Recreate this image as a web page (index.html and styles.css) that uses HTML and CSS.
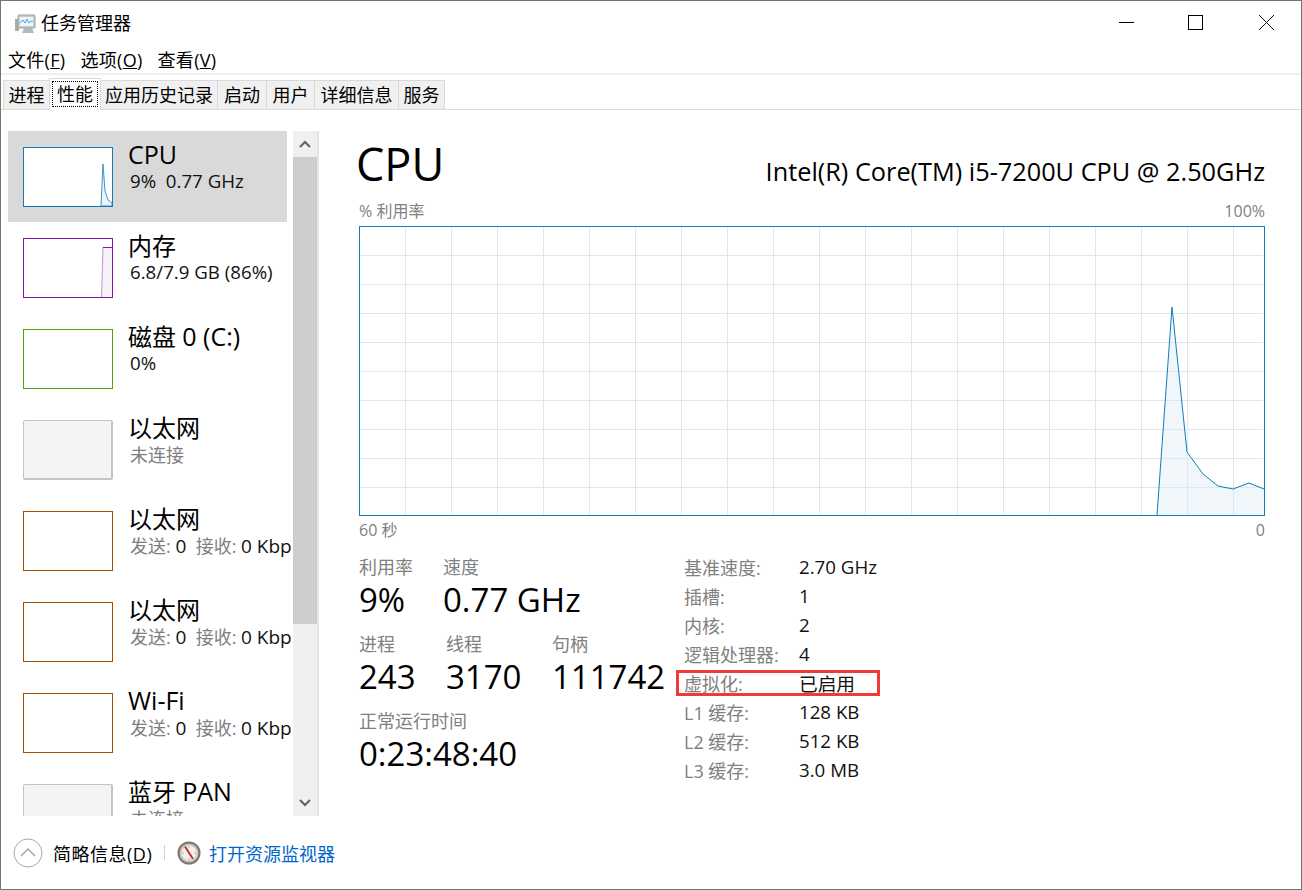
FILE: index.html
```html
<!DOCTYPE html>
<html lang="zh-CN">
<head>
  <meta charset="UTF-8" />
  <title>任务管理器</title>
  <link rel="stylesheet" href="styles.css">
</head>
<body>
  <div class="window">
    <div class="titlebar">
      <svg class="app-icon" width="22" height="22" viewBox="0 0 22 22">
        <rect x="1" y="7" width="4" height="12" fill="#a9aeab"/>
        <rect x="4" y="3" width="17" height="13" rx="1" fill="#c9cccc" stroke="#9a9fa1"/>
        <rect x="6" y="5" width="13" height="9" fill="#eef5fb"/>
        <path d="M6 11l3-3 2 3 2-4 2 4 2-2 2 1" fill="none" stroke="#4aa3e0"/>
        <path d="M8 21h12l-2-5H10z" fill="#b4b8b8"/>
      </svg>
      <span class="title">任务管理器</span>
      <div class="win-btns">
        <svg width="15" height="15" viewBox="0 0 15 15"><path d="M0 7.5h15" stroke="#000"/></svg>
        <svg width="15" height="15" viewBox="0 0 15 15"><rect x="0.5" y="0.5" width="14" height="14" fill="none" stroke="#000"/></svg>
        <svg class="btn-close" width="15" height="15" viewBox="0 0 15 15"><path d="M0 0l15 15M15 0L0 15" stroke="#111" fill="none"/></svg>
      </div>
    </div>

    <div class="menubar">
      <span>文件(<u>F</u>)</span>
      <span>选项(<u>O</u>)</span>
      <span>查看(<u>V</u>)</span>
    </div>

    <div class="tabs">
      <div class="tab tab-first">进程</div>
      <div class="tab tab-active">性能</div>
      <div class="tab tab-w117">应用历史记录</div>
      <div class="tab tab-w49">启动</div>
      <div class="tab tab-w48">用户</div>
      <div class="tab tab-w84">详细信息</div>
      <div class="tab tab-w46">服务</div>
    </div>

    <div class="content">
      <div class="sidebar">
        <div class="list">
          <div class="item item-active">
            <svg class="thumb thumb-cpu" viewBox="0 0 88 58" width="90" height="60">
              <path d="M77 58L79 16 81 43 84 52 88 55V58Z" fill="#eef4f9" stroke="#117dbb" stroke-opacity=".8"/>
            </svg>
            <div class="item-text">
              <div class="item-name"><span class="latin">CPU</span></div>
              <div class="item-sub dark">9%&nbsp; 0.77 GHz</div>
            </div>
          </div>
          <div class="item">
            <svg class="thumb thumb-mem" viewBox="0 0 88 58" width="90" height="60">
              <path d="M77.5 58L79 8H88V58Z" fill="#f4f2f4"/>
              <path d="M77.5 58L79 8" stroke="#c890d8" fill="none"/>
              <path d="M79 8.5H88" stroke="#8b12ae" fill="none"/>
            </svg>
            <div class="item-text">
              <div class="item-name">内存</div>
              <div class="item-sub dark">6.8/7.9 GB (86%)</div>
            </div>
          </div>
          <div class="item">
            <div class="thumb thumb-disk"></div>
            <div class="item-text">
              <div class="item-name">磁盘 <span class="latin">0 (C:)</span></div>
              <div class="item-sub dark">0%</div>
            </div>
          </div>
          <div class="item">
            <div class="thumb thumb-off"></div>
            <div class="item-text">
              <div class="item-name">以太网</div>
              <div class="item-sub">未连接</div>
            </div>
          </div>
          <div class="item">
            <div class="thumb thumb-net"></div>
            <div class="item-text">
              <div class="item-name">以太网</div>
              <div class="item-sub">发送: <b>0</b>&nbsp; 接收: <b>0 Kbps</b></div>
            </div>
          </div>
          <div class="item">
            <div class="thumb thumb-net"></div>
            <div class="item-text">
              <div class="item-name">以太网</div>
              <div class="item-sub">发送: <b>0</b>&nbsp; 接收: <b>0 Kbps</b></div>
            </div>
          </div>
          <div class="item">
            <div class="thumb thumb-net"></div>
            <div class="item-text">
              <div class="item-name"><span class="latin">Wi-Fi</span></div>
              <div class="item-sub">发送: <b>0</b>&nbsp; 接收: <b>0 Kbps</b></div>
            </div>
          </div>
          <div class="item">
            <div class="thumb thumb-off"></div>
            <div class="item-text">
              <div class="item-name">蓝牙 <span class="latin">PAN</span></div>
              <div class="item-sub">未连接</div>
            </div>
          </div>
        </div>
        <div class="scrollbar">
          <div class="sb-btn">
            <svg width="12" height="8" viewBox="0 0 12 8"><path d="M1 7l5-5 5 5" fill="none" stroke="#606060" stroke-width="2"/></svg>
          </div>
          <div class="sb-track"><div class="sb-thumb"></div></div>
          <div class="sb-btn">
            <svg width="12" height="8" viewBox="0 0 12 8"><path d="M1 1l5 5 5-5" fill="none" stroke="#606060" stroke-width="2"/></svg>
          </div>
        </div>
      </div>

      <div class="main">
        <div class="main-head">
          <div class="main-title">CPU</div>
          <div class="cpu-model">Intel(R) Core(TM) i5-7200U CPU @ 2.50GHz</div>
        </div>
        <div class="graph-labels">
          <span>% 利用率</span>
          <span>100%</span>
        </div>
        <svg id="graph" class="graph" width="906" height="290" viewBox="0 0 906 290"></svg>
        <div class="graph-labels graph-bottom">
          <span>60 秒</span>
          <span>0</span>
        </div>

        <div class="details">
          <div class="stats">
            <div class="stat-row">
              <div class="stat stat-usage"><div class="stat-label">利用率</div><div class="stat-value">9%</div></div>
              <div class="stat"><div class="stat-label">速度</div><div class="stat-value">0.77 GHz</div></div>
            </div>
            <div class="stat-row">
              <div class="stat stat-proc"><div class="stat-label">进程</div><div class="stat-value">243</div></div>
              <div class="stat stat-thread"><div class="stat-label">线程</div><div class="stat-value">3170</div></div>
              <div class="stat"><div class="stat-label">句柄</div><div class="stat-value">111742</div></div>
            </div>
            <div class="stat-row">
              <div class="stat"><div class="stat-label">正常运行时间</div><div class="stat-value">0:23:48:40</div></div>
            </div>
          </div>
          <div class="specs">
            <div class="spec"><span class="spec-k">基准速度:</span><span class="spec-v">2.70 GHz</span></div>
            <div class="spec"><span class="spec-k">插槽:</span><span class="spec-v">1</span></div>
            <div class="spec"><span class="spec-k">内核:</span><span class="spec-v">2</span></div>
            <div class="spec"><span class="spec-k">逻辑处理器:</span><span class="spec-v">4</span></div>
            <div class="spec spec-mark"><span class="spec-k">虚拟化:</span><span class="spec-v">已启用</span></div>
            <div class="spec"><span class="spec-k">L1 缓存:</span><span class="spec-v">128 KB</span></div>
            <div class="spec"><span class="spec-k">L2 缓存:</span><span class="spec-v">512 KB</span></div>
            <div class="spec"><span class="spec-k">L3 缓存:</span><span class="spec-v">3.0 MB</span></div>
          </div>
        </div>
      </div>
    </div>

    <div class="footer">
      <svg class="collapse" width="30" height="30" viewBox="0 0 30 30">
        <circle cx="15" cy="15" r="14" fill="#fff" stroke="#a8a8a8"/>
        <path d="M8 18l7-7 7 7" fill="none" stroke="#a8a8a8" stroke-width="1.5"/>
      </svg>
      <span class="footer-text">简略信息(<u>D</u>)</span>
      <span class="footer-sep"></span>
      <svg class="monitor-icon" width="24" height="24" viewBox="0 0 24 24">
        <circle cx="12" cy="12" r="11.5" fill="#77776f"/>
        <circle cx="12" cy="12" r="9.5" fill="#c9c6bd"/>
        <circle cx="12" cy="12" r="7.5" fill="#f2f0ec"/>
        <path d="M8 5.5l8 12.5" stroke="#c9322a" stroke-width="2"/>
        <path d="M12 5v2M5 12h2M19 12h-2M12 19v-2" stroke="#b5b3ab"/>
      </svg>
      <span class="footer-link">打开资源监视器</span>
    </div>
  </div>

  <script>
    // сетка и кривая загрузки
    var svg = document.getElementById("graph");
    var grid = "";
    for (var x = 46; x < 905; x += 46) {
      grid += '<path d="M' + (x + 0.5) + ' 1V289" stroke="#dbe8f1"/>';
    }
    for (var y = 29; y < 289; y += 29) {
      grid += '<path d="M1 ' + (y + 0.5) + 'H904" stroke="#dbe8f1"/>';
    }
    var line = "798,289 813,81 828,226 844,248 859,260 874,263 890,257 905,263";
    svg.innerHTML = grid +
      '<polygon points="' + line + ' 905,289" fill="#d9e8f2" fill-opacity=".4"/>' +
      '<polyline points="' + line + '" fill="none" stroke="#117dbb"/>' +
      '<rect x="0.5" y="0.5" width="905" height="289" fill="none" stroke="#117dbb"/>';
  </script>
</body>
</html>
```

FILE: styles.css
```css
*, *::after {
  box-sizing: border-box;
}

body {
  margin: 0;
  width: 1302px;
  height: 890px;
  overflow: hidden;
  background: white;
  font-family: "Open Sans", "Noto Sans CJK SC", sans-serif;
  color: #000;
}

.window {
  width: 1302px;
  height: 890px;
  border: 1px solid #6b7a6f;
  display: flex;
  flex-direction: column;
  overflow: hidden;
}

.titlebar {
  height: 47px;
  display: flex;
  align-items: center;
  padding: 0 27px 4px 13px;
  flex-shrink: 0;
}

.app-icon {
  margin-right: 5px;
}

.title {
  font-size: 18px;
  margin-bottom: 2px;
}

.win-btns {
  margin-left: auto;
  display: flex;
  align-items: center;
  gap: 54px;
}

.btn-close {
  margin-left: 2px;
}

.menubar {
  height: 27px;
  display: flex;
  align-items: center;
  padding: 0 0 4px 7px;
  font-size: 18px;
  letter-spacing: 0.3px;
  gap: 15px;
  flex-shrink: 0;
  border-bottom: 2px solid #f0f0f0;
}

.tabs {
  height: 35px;
  display: flex;
  align-items: flex-end;
  padding-left: 2px;
  border-bottom: 1px solid #d9d9d9;
  flex-shrink: 0;
}

.tab {
  height: 29px;
  background: #f0f0f0;
  border-top: 1px solid #d9d9d9;
  border-right: 1px solid #d9d9d9;
  font-size: 18px;
  line-height: 29px;
  text-align: center;
}

.tab-first {
  width: 47px;
  border-left: 1px solid #d9d9d9;
}

.tab-w46 { width: 46px; }
.tab-w48 { width: 48px; }
.tab-w49 { width: 49px; }
.tab-w84 { width: 84px; }
.tab-w117 { width: 117px; }

.tab-active {
  background: white;
  width: 52px;
  height: 32px;
  line-height: 30px;
  border: 1px solid #d9d9d9;
  border-bottom: none;
  margin: 0 0 -1px -1px;
  outline: 1px dotted #000;
  outline-offset: -4px;
}

.content {
  height: 706px;
  display: flex;
  flex-shrink: 0;
  padding-top: 21px;
}

.sidebar {
  width: 318px;
  height: 685px;
  display: flex;
  padding-left: 7px;
  flex-shrink: 0;
}

.list {
  width: 285px;
  overflow: hidden;
  height: 685px;
}

.item {
  width: 279px;
  height: 91px;
  display: flex;
  padding: 16px 0 0 15px;
  white-space: nowrap;
}

.item-active {
  background: #d9d9d9;
}

.thumb {
  width: 90px;
  height: 60px;
  flex-shrink: 0;
  margin-right: 15px;
  background: white;
  border: 1px solid #999;
  display: block;
}

.thumb-cpu { border-color: #117dbb; }
.thumb-mem { border-color: #8b12ae; }
.thumb-disk { border-color: #4da60c; }
.thumb-net { border-color: #a74f01; }
.thumb-off {
  background: #f4f4f4;
  border: 1px solid #c4c4c4;
  border-right-width: 2px;
  border-bottom-width: 2px;
  border-radius: 2px;
}

.item-name {
  font-size: 24px;
  line-height: 32px;
  margin-top: -8px;
}

.latin {
  font-size: 25px;
  line-height: 0;
}

.item-sub {
  font-size: 18px;
  line-height: 24px;
  margin-top: -1px;
  margin-left: 2px;
  color: #808080;
}

.item-sub.dark {
  font-size: 18.7px;
  margin-top: -2px;
  color: #111;
}

.item-sub b {
  font-weight: normal;
  font-size: 19px;
  color: #111;
}

.scrollbar {
  width: 26px;
  margin-left: 1px;
  display: flex;
  flex-direction: column;
  background: #f0f0f0;
  border-right: 2px solid #e4e4e4;
}

.sb-btn {
  height: 26px;
  display: flex;
  align-items: center;
  justify-content: center;
  flex-shrink: 0;
}

.sb-track {
  flex: 1;
}

.sb-thumb {
  height: 467px;
  background: #cdcdcd;
}

.main {
  flex: 1;
  padding: 0 36px 0 40px;
  min-width: 0;
}

.main-head {
  display: flex;
  justify-content: space-between;
  align-items: flex-start;
  height: 58px;
  margin-left: -3px;
}

.main-title {
  font-size: 45px;
  line-height: 66px;
}

.cpu-model {
  align-self: flex-end;
  font-size: 25.3px;
  line-height: 36px;
  white-space: nowrap;
}

.graph-labels {
  display: flex;
  justify-content: space-between;
  font-size: 16px;
  color: #808080;
  height: 22px;
  line-height: 22px;
  margin-top: 11px;
}

.graph {
  display: block;
  margin-top: 4px;
}

.graph-bottom {
  margin-top: 3px;
}

.details {
  display: flex;
  margin-top: 14px;
}

.stats {
  width: 325px;
  flex-shrink: 0;
}

.stat-row {
  display: flex;
  height: 77px;
}

.stat-usage { width: 84px; }
.stat-proc { width: 87px; }
.stat-thread { width: 106px; }

.stat-label {
  font-size: 18px;
  line-height: 24px;
  color: #808080;
}

.stat-value {
  font-size: 33px;
  line-height: 42px;
  white-space: nowrap;
}

.specs {
  flex: 1;
  margin-top: -3px;
}

.spec {
  display: flex;
  height: 29px;
  align-items: center;
  font-size: 18px;
  white-space: nowrap;
}

.spec-k {
  width: 115px;
  color: #808080;
}

.spec-v {
  font-size: 18.7px;
  color: #111;
}

.spec-mark {
  position: relative;
}

.spec-mark::after {
  content: "";
  position: absolute;
  left: -8px;
  top: 2px;
  width: 204px;
  height: 26px;
  border: 3px solid #f03a3a;
}

.footer {
  flex: 1;
  display: flex;
  align-items: center;
  padding-left: 12px;
  font-size: 18px;
}

.footer-text {
  margin-left: 10px;
  width: 99px;
  letter-spacing: 0.5px;
  white-space: nowrap;
}

.footer-sep {
  width: 1px;
  height: 15px;
  background: #d0d0d0;
  margin: 0 12px;
}

.footer-link {
  color: #0066cc;
  margin-left: 8px;
}
```
